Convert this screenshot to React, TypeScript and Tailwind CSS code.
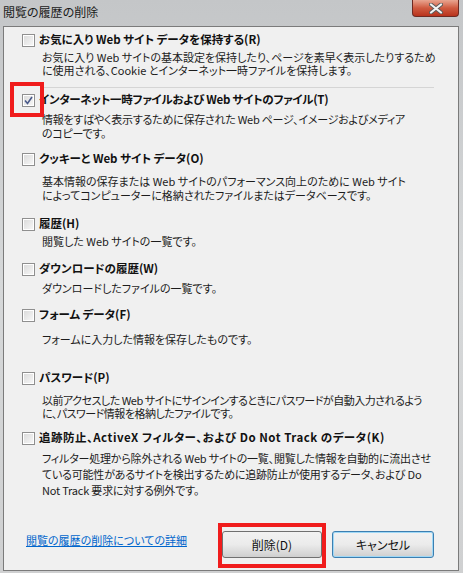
import React from 'react';

type Item = {
  label: string;
  desc: string[];
  checked?: boolean;
  gapTop: number;
  gapDesc: number;
  lh: number;
  lt?: number; // label tracking
  dt?: number; // description tracking
};

const items: Item[] = [
  {
    label: 'お気に入り Web サイト データを保持する(R)',
    desc: [
      'お気に入り Web サイトの基本設定を保持したり、ページを素早く表示したりするため',
      'に使用される、Cookie とインターネット一時ファイルを保持します。',
    ],
    gapTop: 5,
    gapDesc: 3,
    lh: 13,
  },
  {
    label: 'インターネット一時ファイルおよび Web サイトのファイル(T)',
    desc: ['情報をすばやく表示するために保存された Web ページ、イメージおよびメディア', 'のコピーです。'],
    checked: true,
    gapTop: 10,
    gapDesc: 4,
    lh: 14,
    lt: -0.3,
    dt: -0.25,
  },
  {
    label: 'クッキーと Web サイト データ(O)',
    desc: [
      '基本情報の保存または Web サイトのパフォーマンス向上のために Web サイト',
      'によってコンピューターに格納されたファイルまたはデータベースです。',
    ],
    gapTop: 11,
    gapDesc: 7,
    lh: 14,
  },
  { label: '履歴(H)', desc: ['閲覧した Web サイトの一覧です。'], gapTop: 14, gapDesc: 2, lh: 14 },
  { label: 'ダウンロードの履歴(W)', desc: ['ダウンロードしたファイルの一覧です。'], gapTop: 13, gapDesc: 4, lh: 14 },
  { label: 'フォーム データ(F)', desc: ['フォームに入力した情報を保存したものです。'], gapTop: 12, gapDesc: 9, lh: 14 },
  {
    label: 'パスワード(P)',
    desc: [
      '以前アクセスした Web サイトにサインインするときにパスワードが自動入力されるよう',
      'に、パスワード情報を格納したファイルです。',
    ],
    gapTop: 24,
    gapDesc: 8,
    lh: 13,
    dt: -0.5,
  },
  {
    label: '追跡防止、ActiveX フィルター、および Do Not Track のデータ(K)',
    desc: [
      'フィルター処理から除外される Web サイトの一覧、閲覧した情報を自動的に流出させ',
      'ている可能性があるサイトを検出するために追跡防止が使用するデータ、および Do',
      'Not Track 要求に対する例外です。',
    ],
    gapTop: 10,
    gapDesc: 4,
    lh: 16,
    lt: 0.5,
    dt: -0.2,
  },
];

function CheckBox({ checked }: { checked?: boolean }) {
  return (
    <div className="w-[13px] h-[13px] border border-[#8f8f8f] bg-white p-[1px] shrink-0">
      <div className="w-full h-full bg-gradient-to-br from-[#dcdcdc] to-[#f6f6f6] flex items-center justify-center">
        {checked && (
          <svg width="9" height="9" viewBox="0 0 9 9">
            <path d="M1 4.5 L3.5 7.5 L8 1" fill="none" stroke="#4a5a8a" strokeWidth="1.6" />
          </svg>
        )}
      </div>
    </div>
  );
}

export default function App() {
  return (
    <div
      className="w-[463px] h-[573px] flex flex-col bg-gradient-to-b from-[#c4c6c8] via-[#d6d8d9] to-[#cfd0d1] text-[#111]"
      style={{ fontFamily: '"Noto Sans CJK JP", "Noto Sans", sans-serif', fontFeatureSettings: '"palt"' }}
    >
      {/* title bar */}
      <div className="h-[26px] flex justify-between pl-[3px] pr-[4px]">
        <div className="text-[12px] leading-[24px] text-[#1a1a1a]">閲覧の履歴の削除</div>
        <div className="w-[47px] h-[17px] rounded-b-[4px] border border-t-0 border-[#6e2a22] bg-gradient-to-b from-[#e8a591] via-[#cf5a40] to-[#b8321c] flex items-center justify-center">
          <svg width="14" height="11" viewBox="0 0 14 11">
            <path d="M2 1.5 L12 9.5 M12 1.5 L2 9.5" stroke="#5a5a5a" strokeWidth="4" strokeLinecap="round" />
            <path d="M2 1.5 L12 9.5 M12 1.5 L2 9.5" stroke="#f4f4f4" strokeWidth="2.2" strokeLinecap="round" />
          </svg>
        </div>
      </div>

      {/* panel */}
      <div className="relative ml-[3px] w-[456px] h-[545px] border border-[#7b7b7b] bg-[#f0f0f0] pl-[18px]">
        {items.map((it, i) => (
          <div key={i} style={{ marginTop: it.gapTop }}>
            {i === 1 && <div className="h-px bg-[#d5d5d5] ml-[19px] mb-[4px] w-[393px]" />}
            <div className="flex items-center h-[16px] gap-[4px]">
              <CheckBox checked={it.checked} />
              <span className="text-[11.5px] font-bold whitespace-nowrap" style={{ letterSpacing: it.lt ?? 0 }}>
                {it.label}
              </span>
            </div>
            <div
              className="pl-[20px] text-[11px] whitespace-nowrap text-[#1c1c1c]"
              style={{ marginTop: it.gapDesc, lineHeight: `${it.lh}px`, letterSpacing: it.dt ?? 0 }}
            >
              {it.desc.map((d, j) => (
                <div key={j}>{d}</div>
              ))}
            </div>
          </div>
        ))}

        {/* footer */}
        <div className="flex items-center mt-[33px] pl-[4px] pr-[24px]">
          <a className="text-[11px] text-[#0066cc] underline whitespace-nowrap mt-[-9px]">閲覧の履歴の削除についての詳細</a>
          <div className="ml-auto flex gap-[10px]">
            <button className="w-[100px] h-[27px] rounded-[3px] border border-[#707070] bg-gradient-to-b from-[#f2f2f2] via-[#ebebeb] to-[#cfcfcf] text-[12px] text-[#111]">
              削除(D)
            </button>
            <button className="w-[102px] h-[27px] rounded-[3px] border border-[#3c7fb1] shadow-[inset_0_0_0_1px_#9fd8f6] bg-gradient-to-b from-[#f2f2f2] via-[#ebebeb] to-[#cfcfcf] text-[12px] text-[#111]">
              キャンセル
            </button>
          </div>
        </div>

        {/* highlight marks */}
        <div className="absolute left-[6px] top-[55px] w-[34px] h-[35px] border-[4px] border-[#f01c1c]" />
        <div className="absolute left-[214px] top-[496px] w-[108px] h-[45px] border-[4px] border-[#f01c1c]" />
      </div>
    </div>
  );
}
